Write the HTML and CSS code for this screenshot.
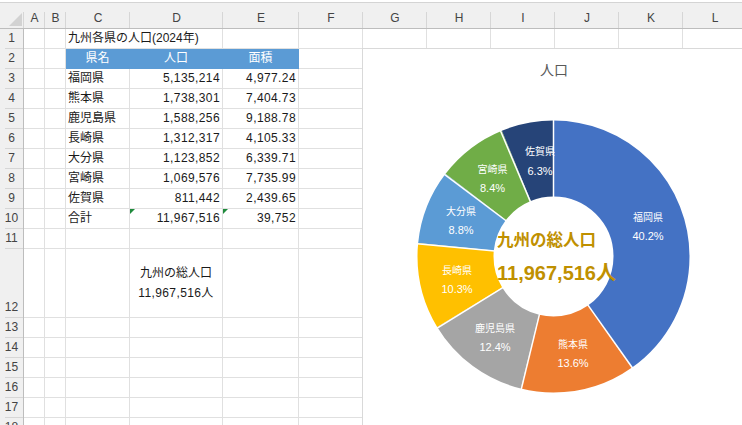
FILE: index.html
```html
<!DOCTYPE html>
<html lang="ja">
<head>
    <meta charset="UTF-8">
    <title>九州各県の人口</title>
    <link rel="stylesheet" href="styles.css">
</head>
<body>
    <div class="sheet">
        <div class="topbar"></div>

        <div class="cols">
            <span class="corner"></span>
            <span>A</span><span>B</span><span>C</span><span>D</span><span>E</span><span>F</span>
            <span>G</span><span>H</span><span>I</span><span>J</span><span>K</span><span>L</span>
        </div>

        <div class="row">
            <div class="rh">1</div><div></div><div></div>
            <div class="span2">九州各県の人口(2024年)</div>
            <div></div><div></div>
            <div></div><div></div><div></div><div></div><div></div><div></div>
        </div>
        <div class="row">
            <div class="rh">2</div><div></div><div></div>
            <div class="hdr">県名</div><div class="hdr">人口</div><div class="hdr">面積</div>
            <div></div>
        </div>
        <div class="row">
            <div class="rh">3</div><div></div><div></div>
            <div>福岡県</div><div class="num">5,135,214</div><div class="num">4,977.24</div><div></div>
        </div>
        <div class="row">
            <div class="rh">4</div><div></div><div></div>
            <div>熊本県</div><div class="num">1,738,301</div><div class="num">7,404.73</div><div></div>
        </div>
        <div class="row">
            <div class="rh">5</div><div></div><div></div>
            <div>鹿児島県</div><div class="num">1,588,256</div><div class="num">9,188.78</div><div></div>
        </div>
        <div class="row">
            <div class="rh">6</div><div></div><div></div>
            <div>長崎県</div><div class="num">1,312,317</div><div class="num">4,105.33</div><div></div>
        </div>
        <div class="row">
            <div class="rh">7</div><div></div><div></div>
            <div>大分県</div><div class="num">1,123,852</div><div class="num">6,339.71</div><div></div>
        </div>
        <div class="row">
            <div class="rh">8</div><div></div><div></div>
            <div>宮崎県</div><div class="num">1,069,576</div><div class="num">7,735.99</div><div></div>
        </div>
        <div class="row">
            <div class="rh">9</div><div></div><div></div>
            <div>佐賀県</div><div class="num">811,442</div><div class="num">2,439.65</div><div></div>
        </div>
        <div class="row">
            <div class="rh">10</div><div></div><div></div>
            <div>合計</div><div class="num flag">11,967,516</div><div class="num flag">39,752</div><div></div>
        </div>
        <div class="row">
            <div class="rh">11</div><div></div><div></div><div></div><div></div><div></div><div></div>
        </div>
        <div class="row tall">
            <div class="rh">12</div><div></div><div></div><div></div>
            <div class="wrap"><span>九州の総人口</span><span class="num">11,967,516人</span></div>
            <div></div><div></div>
        </div>
        <div class="row">
            <div class="rh">13</div><div></div><div></div><div></div><div></div><div></div><div></div>
        </div>
        <div class="row">
            <div class="rh">14</div><div></div><div></div><div></div><div></div><div></div><div></div>
        </div>
        <div class="row">
            <div class="rh">15</div><div></div><div></div><div></div><div></div><div></div><div></div>
        </div>
        <div class="row">
            <div class="rh">16</div><div></div><div></div><div></div><div></div><div></div><div></div>
        </div>
        <div class="row">
            <div class="rh">17</div><div></div><div></div><div></div><div></div><div></div><div></div>
        </div>
        <div class="row">
            <div class="rh">18</div><div></div><div></div><div></div><div></div><div></div><div></div>
        </div>

        <!-- グラフ (シート上に浮いている) -->
        <div class="chart">
            <div class="chart-title">人口</div>
            <svg class="donut" width="378" height="345" viewBox="0 0 378 345">
                <g transform="translate(190.5 176.5)">
                    <g transform="rotate(-90)" fill="none" stroke-width="76">
                        <circle r="98" stroke="#4472c4" stroke-dasharray="247.44 615.75"/>
                        <circle r="98" stroke="#ed7d31" stroke-dasharray="83.76 615.75" stroke-dashoffset="-247.44"/>
                        <circle r="98" stroke="#a5a5a5" stroke-dasharray="76.53 615.75" stroke-dashoffset="-331.2"/>
                        <circle r="98" stroke="#ffc000" stroke-dasharray="63.23 615.75" stroke-dashoffset="-407.73"/>
                        <circle r="98" stroke="#5b9bd5" stroke-dasharray="54.15 615.75" stroke-dashoffset="-470.96"/>
                        <circle r="98" stroke="#70ad47" stroke-dasharray="51.54 615.75" stroke-dashoffset="-525.11"/>
                        <circle r="98" stroke="#264478" stroke-dasharray="39.1 615.75" stroke-dashoffset="-576.65"/>
                    </g>
                    <g stroke="#fff" stroke-width="1.5">
                        <line y1="-59" y2="-137"/>
                        <line y1="-59" y2="-137" transform="rotate(144.67)"/>
                        <line y1="-59" y2="-137" transform="rotate(193.64)"/>
                        <line y1="-59" y2="-137" transform="rotate(238.38)"/>
                        <line y1="-59" y2="-137" transform="rotate(275.35)"/>
                        <line y1="-59" y2="-137" transform="rotate(307.01)"/>
                        <line y1="-59" y2="-137" transform="rotate(337.14)"/>
                    </g>
                    <g class="labels" fill="#fff" text-anchor="middle">
                        <g transform="translate(94.5 -30)"><text class="nm" y="-5.7">福岡県</text><text class="pc" y="13.5">40.2%</text></g>
                        <g transform="translate(19.5 97)"><text class="nm" y="-5.7">熊本県</text><text class="pc" y="13.5">13.6%</text></g>
                        <g transform="translate(-58.5 81)"><text class="nm" y="-5.7">鹿児島県</text><text class="pc" y="13.5">12.4%</text></g>
                        <g transform="translate(-96.5 23)"><text class="nm" y="-5.7">長崎県</text><text class="pc" y="13.5">10.3%</text></g>
                        <g transform="translate(-92.5 -36)"><text class="nm" y="-5.7">大分県</text><text class="pc" y="13.5">8.8%</text></g>
                        <g transform="translate(-61 -78)"><text class="nm" y="-5.7">宮崎県</text><text class="pc" y="13.5">8.4%</text></g>
                        <g transform="translate(-13.5 -95.5)"><text class="nm" y="-5.7">佐賀県</text><text class="pc" y="13.5">6.3%</text></g>
                    </g>
                    <g class="total" fill="#bf9000">
                        <text class="t1" x="-56.5" y="-10.7">九州の総人口</text>
                        <text class="t2" x="-56.5" y="23.2">11,967,516人</text>
                    </g>
                </g>
            </svg>
        </div>
    </div>
</body>
</html>
```

FILE: styles.css
```css
* {
  box-sizing: border-box;
}

body {
  margin: 0;
  width: 742px;
  height: 425px;
  overflow: hidden;
  background-color: #fff;
  font-family: "Liberation Sans", "Noto Sans CJK JP", sans-serif;
  font-size: 12px;
  color: #1a1a1a;
}

.sheet {
  position: relative;
}

.topbar {
  height: 3px;
  background-color: #fff;
  border-bottom: 1px solid #d4d4d4;
}

.cols, .row {
  display: grid;
  grid-template-columns: 24px 21px 21px 64px 93px 76px repeat(7, 64px);
}

/* 列見出し */
.cols {
  height: 26px;
  background-color: #f0f0f0;
  border-bottom: 1px solid #bdbdbd;
  color: #444;
}

.cols span {
  display: flex;
  align-items: center;
  justify-content: center;
  padding-top: 4px;
  background: linear-gradient(#d6d6d6, #d6d6d6) right bottom / 1px 16px no-repeat;
}

.cols .corner {
  align-items: flex-end;
  justify-content: flex-end;
  padding: 0 2px 2px 0;
}

.corner::after {
  content: "";
  border-left: 13px solid transparent;
  border-bottom: 13px solid #d2d2d2;
}

/* セル */
.row {
  height: 20px;
}

.row.tall {
  height: 69px;
}

.row > div {
  display: flex;
  align-items: flex-end;
  padding: 0 2px 2px;
  line-height: 16px;
  white-space: nowrap;
  border-right: 1px solid #e0e0e0;
  border-bottom: 1px solid #e0e0e0;
}

.row > .rh {
  justify-content: center;
  padding-bottom: 3px;
  color: #444;
  background: #f0f0f0 linear-gradient(#d6d6d6, #d6d6d6) right bottom / 18px 1px no-repeat;
  border-bottom: 0;
  border-right-color: #bdbdbd;
}

.span2 {
  grid-column: span 2;
}

.row > .hdr {
  justify-content: center;
  color: #fff;
  background-color: #5b9bd5;
  border-color: #5b9bd5;
}

.num {
  letter-spacing: 0.4px;
}

.row > .num {
  justify-content: flex-end;
}

.flag {
  position: relative;
}

.flag::before {
  content: "";
  position: absolute;
  left: 0;
  top: 0;
  border-top: 5px solid #1f8a3c;
  border-right: 5px solid transparent;
}

.row > .wrap {
  flex-direction: column;
  justify-content: center;
  align-items: center;
  padding: 0 2px;
  line-height: 20px;
}

/* グラフ */
.chart {
  position: absolute;
  left: 362px;
  top: 48px;
  width: 400px;
  height: 400px;
  background-color: #fff;
  border: 1px solid #d9d9d9;
}

.chart-title {
  width: 382px;
  padding-top: 11px;
  line-height: 20px;
  font-size: 14px;
  text-align: center;
  color: #595959;
}

.donut {
  display: block;
}

.labels .nm {
  font-size: 10px;
}

.labels .pc {
  font-size: 11px;
}

.total text {
  font-weight: bold;
}

.total .t1 {
  font-size: 16.5px;
}

.total .t2 {
  font-size: 20px;
}
```
